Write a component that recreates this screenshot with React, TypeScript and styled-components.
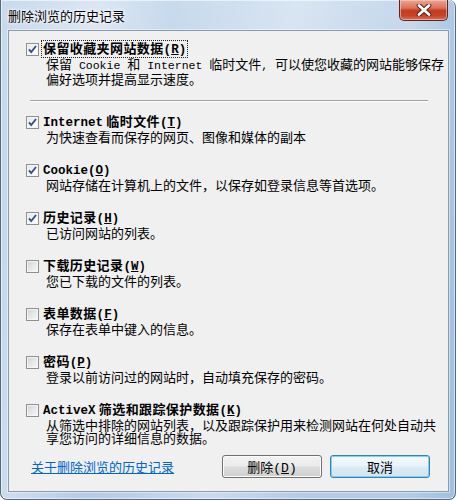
import React from 'react';
import styled, { createGlobalStyle } from 'styled-components';

const GlobalStyle = createGlobalStyle`
  html, body {
    margin: 0;
    padding: 0;
  }
  body {
    width: 456px;
    height: 500px;
    overflow: hidden;
    background: #fff;
    font-family: "Noto Sans CJK SC", "Liberation Sans", sans-serif;
  }
`;

const Window = styled.div`
  box-sizing: border-box;
  width: 456px;
  height: 500px;
  display: flex;
  flex-direction: column;
  border: 1px solid #56687c;
  border-top: none;
  border-radius: 0 7px 7px 7px;
  background:
    linear-gradient(100deg, rgba(255,255,255,0) 0%, rgba(255,255,255,0.35) 18%, rgba(255,255,255,0) 32%,
      rgba(255,255,255,0.3) 55%, rgba(255,255,255,0) 72%),
    linear-gradient(90deg, rgba(120,170,215,0) 90%, rgba(120,170,215,0.35) 100%),
    linear-gradient(180deg, #c8daed 0%, #bcd2e9 40%, #b3cbe5 100%);
  box-shadow: inset 0 0 0 1px rgba(255,255,255,0.55);
`;

const TitleBar = styled.div`
  height: 30px;
  flex: none;
  display: flex;
  justify-content: space-between;
  align-items: flex-start;
  padding: 0 7px;
`;

const Title = styled.span`
  margin-top: 7px;
  font-size: 13px;
  line-height: 18px;
  color: #000;
  text-shadow: 0 0 5px #fff, 0 0 3px #fff, 0 0 1px #fff;
`;

const CloseButton = styled.div`
  box-sizing: border-box;
  width: 49px;
  height: 21px;
  display: flex;
  align-items: center;
  justify-content: center;
  border: 1px solid #5a2720;
  border-top: none;
  border-radius: 0 0 5px 5px;
  background: linear-gradient(180deg, #eaa593 0%, #dc7259 40%, #c43c22 52%, #c6432a 78%, #dd7052 100%);
  box-shadow: inset 0 0 0 1px rgba(255, 214, 200, 0.55);
`;

const Client = styled.div`
  flex: 1;
  box-sizing: border-box;
  margin: 0 6px 7px 7px;
  padding: 10px 18px 0 17px;
  display: flex;
  flex-direction: column;
  background: #f0f0f0;
  border: 1px solid #8c9aae;
  box-shadow: 0 0 0 1px rgba(255,255,255,0.45);
  color: #000;
`;

const Option = styled.div`
  display: flex;
  flex-direction: column;

  & + & {
    margin-top: 19px;
  }
`;

const Row = styled.div`
  height: 16px;
  display: flex;
  align-items: center;
`;

const Box = styled.span<{ $checked?: boolean }>`
  box-sizing: border-box;
  width: 13px;
  height: 13px;
  flex: none;
  position: relative;
  border: 1px solid #8e8f8f;
  background: ${p => p.$checked
    ? 'linear-gradient(135deg, #e2e4e7 0%, #fbfbfb 70%)'
    : 'linear-gradient(135deg, #c9ccd1 0%, #e4e6e8 45%, #f6f6f6 100%)'};
  box-shadow: inset 0 0 0 1px #f6f6f6;

  svg {
    position: absolute;
    left: -1px;
    top: -1px;
  }
`;

const Mono = styled.span`
  font-family: "Liberation Mono", monospace;
`;

const Key = styled.span`
  text-decoration: underline;
`;

const Label = styled.span<{ $focused?: boolean }>`
  margin-left: 2px;
  padding: 0 1px;
  border: 1px ${p => (p.$focused ? 'dotted #222' : 'solid transparent')};
  font-size: 13px;
  line-height: 13px;
  font-weight: 700;
  letter-spacing: 0.4px;
  white-space: nowrap;

  ${Mono} {
    font-size: 12.5px;
    letter-spacing: 0;
  }
`;

const Desc = styled.div`
  padding-left: 20px;
  font-size: 13px;
  line-height: 13px;
  white-space: nowrap;

  ${Mono} {
    font-size: 11.5px;
  }
`;

const Separator = styled.div`
  margin: 15px 2px 12px 4px;
  border-top: 1px solid #a0a0a0;
  border-bottom: 1px solid #ffffff;
`;

const Footer = styled.div`
  margin-top: 11px;
  display: flex;
  align-items: center;
  gap: 8px;
`;

const HelpLink = styled.a`
  flex: 1;
  margin-left: 5px;
  font-size: 13px;
  color: #0066cc;
  text-decoration: underline;
  cursor: pointer;
`;

const Button = styled.button<{ $default?: boolean }>`
  box-sizing: border-box;
  width: 100px;
  height: 23px;
  padding: 0;
  border-radius: 3px;
  border: 1px solid ${p => (p.$default ? '#3c7fb1' : '#707070')};
  background: ${p => p.$default
    ? 'linear-gradient(180deg, #f3f8fb 0%, #eaf3f9 48%, #dcebf5 52%, #d2e5f2 100%)'
    : 'linear-gradient(180deg, #f2f2f2 0%, #ebebeb 48%, #dddddd 52%, #cfcfcf 100%)'};
  box-shadow: inset 0 0 0 1px ${p => (p.$default ? '#7dd3f6' : '#fcfcfc')};
  font-family: "Noto Sans CJK SC", sans-serif;
  font-size: 13px;
  color: #000;
`;

const CheckMark = () => (
  <svg width="13" height="13" viewBox="0 0 13 13">
    <path d="M3 6.4 L5.2 9 L10 3" fill="none" stroke="#354c86" strokeWidth="1.9" />
  </svg>
);

const CloseGlyph = () => (
  <svg width="18" height="12" viewBox="0 0 18 12">
    <path d="M4 1.5 L14 10.5 M14 1.5 L4 10.5" stroke="#4a1d16" strokeWidth="4.6" strokeLinecap="round" />
    <path d="M4 1.5 L14 10.5 M14 1.5 L4 10.5" stroke="#ffffff" strokeWidth="2.8" strokeLinecap="round" />
  </svg>
);

interface Item {
  label: React.ReactNode;
  lines: React.ReactNode[];
  checked: boolean;
}

const items: Item[] = [
  {
    label: <><Mono>Internet</Mono> 临时文件<Mono>(<Key>T</Key>)</Mono></>,
    lines: ['为快速查看而保存的网页、图像和媒体的副本'],
    checked: true,
  },
  {
    label: <Mono>Cookie(<Key>O</Key>)</Mono>,
    lines: ['网站存储在计算机上的文件，以保存如登录信息等首选项。'],
    checked: true,
  },
  {
    label: <>历史记录<Mono>(<Key>H</Key>)</Mono></>,
    lines: ['已访问网站的列表。'],
    checked: true,
  },
  {
    label: <>下载历史记录<Mono>(<Key>W</Key>)</Mono></>,
    lines: ['您已下载的文件的列表。'],
    checked: false,
  },
  {
    label: <>表单数据<Mono>(<Key>F</Key>)</Mono></>,
    lines: ['保存在表单中键入的信息。'],
    checked: false,
  },
  {
    label: <>密码<Mono>(<Key>P</Key>)</Mono></>,
    lines: ['登录以前访问过的网站时，自动填充保存的密码。'],
    checked: false,
  },
  {
    label: <><Mono>ActiveX</Mono> 筛选和跟踪保护数据<Mono>(<Key>K</Key>)</Mono></>,
    lines: ['从筛选中排除的网站列表，以及跟踪保护用来检测网站在何处自动共', '享您访问的详细信息的数据。'],
    checked: false,
  },
];

const CheckOption: React.FC<Item & { focused?: boolean }> = ({ label, lines, checked, focused }) => (
  <Option>
    <Row>
      <Box $checked={checked}>{checked && <CheckMark />}</Box>
      <Label $focused={focused}>{label}</Label>
    </Row>
    {lines.map((line, i) => (
      <Desc key={i}>{line}</Desc>
    ))}
  </Option>
);

const App: React.FC = () => {
  return (
    <>
      <GlobalStyle />
      <Window>
        <TitleBar>
          <Title>删除浏览的历史记录</Title>
          <CloseButton>
            <CloseGlyph />
          </CloseButton>
        </TitleBar>
        <Client>
          <CheckOption
            focused
            checked
            label={<>保留收藏夹网站数据<Mono>(<Key>R</Key>)</Mono></>}
            lines={[
              <>保留<Mono> Cookie </Mono>和<Mono> Internet </Mono>临时文件<Mono>, </Mono>可以使您收藏的网站能够保存</>,
              '偏好选项并提高显示速度。',
            ]}
          />
          <Separator />
          {items.map((item, i) => (
            <CheckOption key={i} {...item} />
          ))}
          <Footer>
            <HelpLink>关于删除浏览的历史记录</HelpLink>
            <Button>删除<Mono>(<Key>D</Key>)</Mono></Button>
            <Button $default>取消</Button>
          </Footer>
        </Client>
      </Window>
    </>
  );
};

export default App;
